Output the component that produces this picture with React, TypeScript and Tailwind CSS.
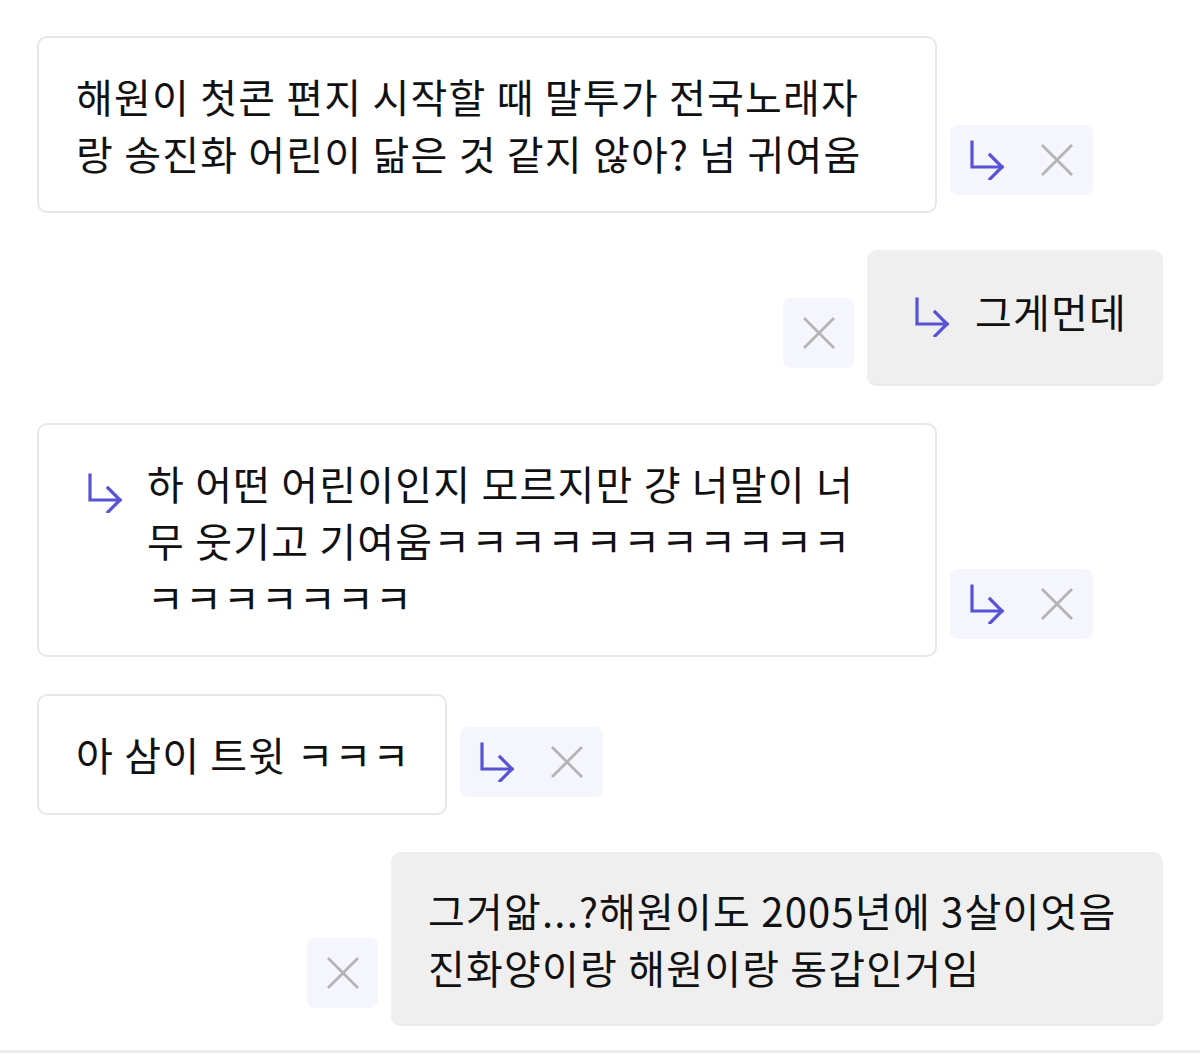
import React from "react";

const Arrow = ({ className = "" }: { className?: string }) => (
  <svg
    viewBox="0 0 36 40"
    className={"w-[36px] h-[40px] shrink-0 " + className}
    fill="none"
    stroke="#5852d6"
    strokeWidth={3.2}
    strokeLinecap="square"
    strokeLinejoin="miter"
  >
    <path d="M2 2 V27 H32" />
    <path d="M20 15 L32 27 L20 39" />
  </svg>
);

const XIcon = () => (
  <svg viewBox="0 0 34 34" className="w-[34px] h-[34px]" fill="none" stroke="#b4b4b4" strokeWidth={2.8}>
    <path d="M2 2 L32 32 M32 2 L2 32" />
  </svg>
);

const ActionBox = ({ withArrow = true }: { withArrow?: boolean }) => (
  <div
    className={
      "mb-[18px] h-[70px] rounded-[8px] bg-[#f5f5fd] flex items-center shrink-0 " +
      (withArrow ? "w-[143px] pl-[20px] gap-[34px]" : "w-[71px] justify-center")
    }
  >
    {withArrow && <Arrow />}
    <XIcon />
  </div>
);

const font = { fontFamily: '"Noto Sans CJK KR", "Noto Sans", sans-serif' };

export default function App() {
  return (
    <div
      className="w-[1200px] h-[1064px] bg-white flex flex-col text-[#111111] text-[40px] leading-[57px] tracking-[1.2px]"
      style={font}
    >
      <div className="flex flex-col gap-[37px] pt-[36px] px-[37px]">
        {/* Row 1 */}
        <div className="flex items-end gap-[13px]">
          <div className="w-[900px] border-2 border-[#e7e7e7] rounded-[10px] bg-white px-[37px] pt-[30px] pb-[29px] whitespace-nowrap">
            <div>해원이 첫콘 편지 시작할 때 말투가 전국노래자</div>
            <div>랑 송진화 어린이 닮은 것 같지 않아? 넘 귀여움</div>
          </div>
          <ActionBox />
        </div>

        {/* Row 2 */}
        <div className="flex items-end justify-end gap-[13px]">
          <ActionBox withArrow={false} />
          <div className="w-[296px] h-[136px] rounded-[10px] bg-[#efefef] border-b-2 border-[#e9e9e9] pl-[48px] pt-[33px] flex items-start gap-[24px] whitespace-nowrap">
            <Arrow className="mt-[14px]" />
            <div>그게먼데</div>
          </div>
        </div>

        {/* Row 3 */}
        <div className="flex items-end gap-[13px]">
          <div className="w-[900px] border-2 border-[#e7e7e7] rounded-[10px] bg-white pl-[49px] pr-[37px] pt-[30px] pb-[29px] flex items-start gap-[23px] whitespace-nowrap">
            <Arrow className="mt-[18px]" />
            <div>
              <div>하 어떤 어린이인지 모르지만 걍 너말이 너</div>
              <div>무 웃기고 기여움ㅋㅋㅋㅋㅋㅋㅋㅋㅋㅋㅋ</div>
              <div>ㅋㅋㅋㅋㅋㅋㅋ</div>
            </div>
          </div>
          <ActionBox />
        </div>

        {/* Row 4 */}
        <div className="flex items-end gap-[13px]">
          <div className="w-[410px] border-2 border-[#e7e7e7] rounded-[10px] bg-white px-[37px] pt-[30px] pb-[30px] whitespace-nowrap">
            <div>아 삼이 트윗 ㅋㅋㅋ</div>
          </div>
          <ActionBox />
        </div>

        {/* Row 5 */}
        <div className="flex items-end justify-end gap-[13px]">
          <ActionBox withArrow={false} />
          <div className="w-[772px] rounded-[10px] bg-[#efefef] border-b-2 border-[#e9e9e9] px-[37px] pt-[30px] pb-[28px] whitespace-nowrap">
            <div>그거앎...?해원이도 2005년에 3살이엇음</div>
            <div>진화양이랑 해원이랑 동갑인거임</div>
          </div>
        </div>
      </div>

      <div className="mt-auto mb-[11px] h-[3px] bg-[#ececec]" />
    </div>
  );
}
